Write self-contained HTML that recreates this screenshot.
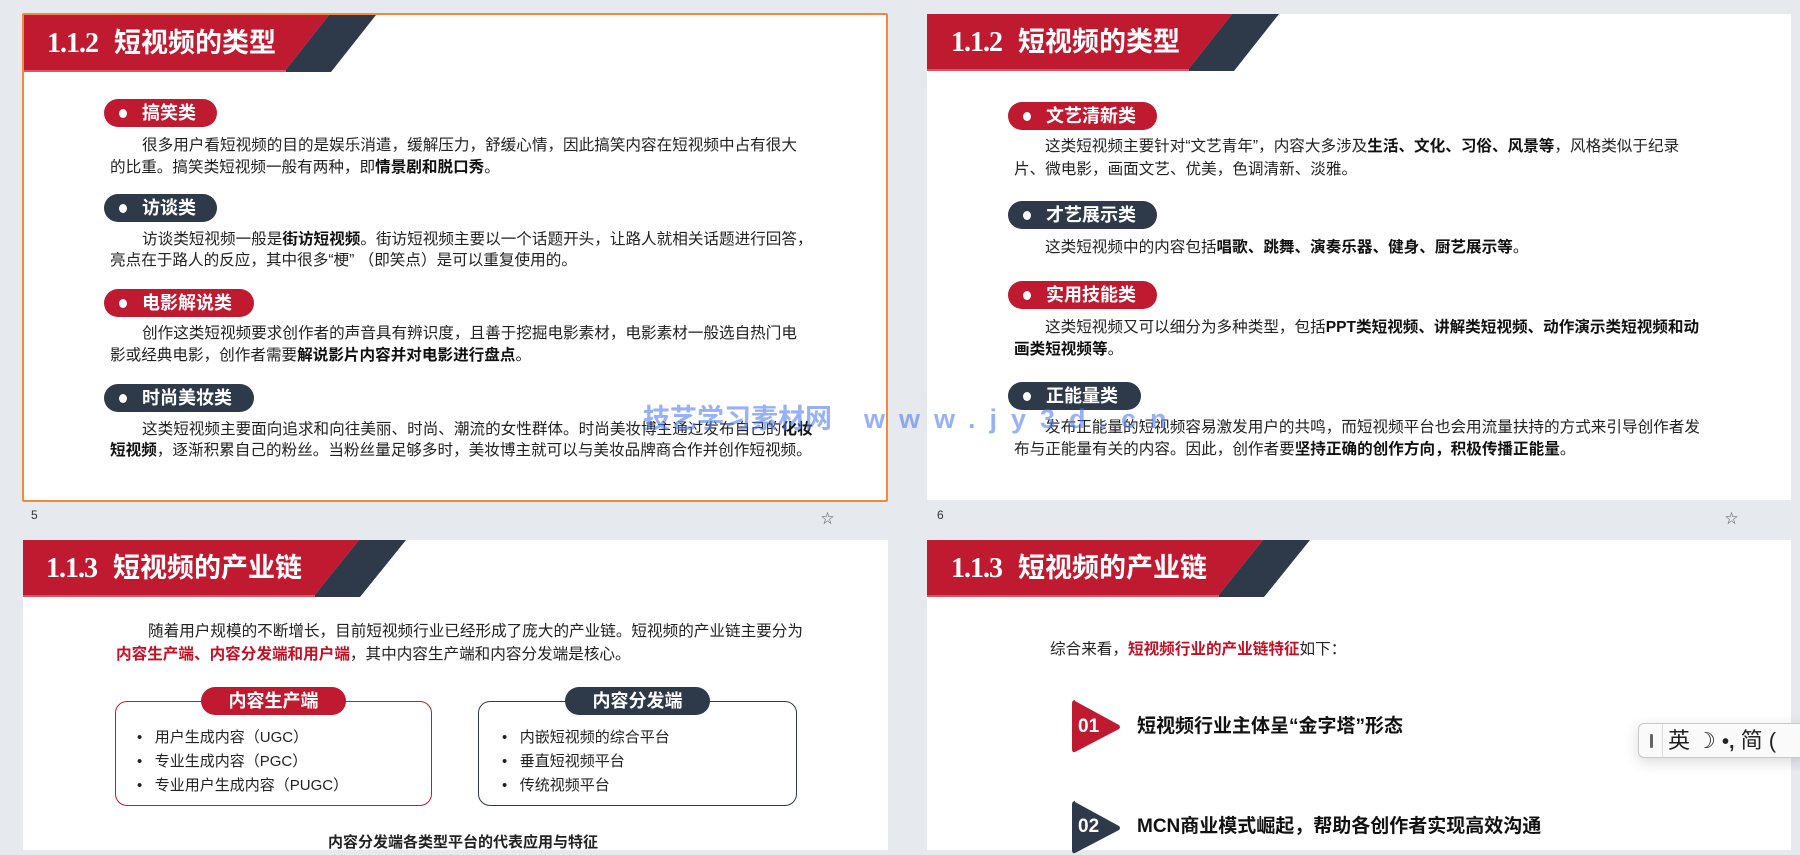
<!DOCTYPE html>
<html><head><meta charset="utf-8">
<style>
*{margin:0;padding:0;box-sizing:border-box}
body{width:1800px;height:841px;overflow:hidden;background:#e6e9ee;font-family:"Liberation Sans","Noto Sans CJK SC",sans-serif;position:relative;color:#222}
.slide{position:absolute;background:#fff;overflow:hidden}
.ab{position:absolute}
.hdr{position:absolute;left:0;top:0;width:420px;height:57px}
.ttl{position:absolute;top:0;height:57px;line-height:57px;color:#fff;font-weight:bold;font-size:27px;white-space:nowrap}
.ttl .n{font-family:"Liberation Serif",serif;font-size:28px;margin-right:16px;letter-spacing:-1px}
.pill{position:absolute;height:28px;border-radius:14px;color:#fff;font-weight:bold;font-size:18px;line-height:28px;padding-left:38px;white-space:nowrap}
.pill:before{content:"";position:absolute;left:15px;top:10px;width:8px;height:9px;border-radius:50%;background:#fff}
.r{background:#c01a30}.d{background:#2e3949}
.ln{position:absolute;font-size:15.6px;line-height:22px;height:22px;white-space:nowrap;color:#222}
.ln b{font-weight:bold;color:#111}
.pn{position:absolute;font-size:12px;color:#333}
.star{position:absolute;font-size:13px;color:#555}
.box{position:absolute;border:1.3px solid;border-radius:12px}
.bp{position:absolute;height:28px;border-radius:14px;color:#fff;font-weight:bold;font-size:18px;line-height:28px;text-align:center}
.bl{position:absolute;font-size:15px;line-height:22px;white-space:nowrap;color:#222}
</style></head><body>

<!-- Slide 5 -->
<div class="slide" style="left:22px;top:13px;width:866px;height:489px;border:2px solid #f5883c;border-radius:2px">
  <svg class="hdr" style="left:0;top:0" width="420" height="57"><polygon points="0,0 305,0 260,57 0,57" fill="#c01a30"/><polygon points="305,0 352,0 307,57 260,57" fill="#2e3949"/><rect x="0" y="55" width="262" height="2" fill="#d9566a"/></svg>
  <div class="ttl" style="left:23px;top:0px"><span class="n">1.1.2</span>短视频的类型</div>
</div>
<div class="pill r" style="left:104px;top:99px;width:113px">搞笑类</div>
<div class="ln" style="left:142px;top:135px">很多用户看短视频的目的是娱乐消遣，缓解压力，舒缓心情，因此搞笑内容在短视频中占有很大</div>
<div class="ln" style="left:110px;top:157px">的比重。搞笑类短视频一般有两种，即<b>情景剧和脱口秀</b>。</div>
<div class="pill d" style="left:104px;top:194px;width:113px">访谈类</div>
<div class="ln" style="left:142px;top:229px">访谈类短视频一般是<b>街访短视频</b>。街访短视频主要以一个话题开头，让路人就相关话题进行回答，</div>
<div class="ln" style="left:110px;top:250px">亮点在于路人的反应，其中很多“梗” （即笑点）是可以重复使用的。</div>
<div class="pill r" style="left:104px;top:289px;width:150px">电影解说类</div>
<div class="ln" style="left:142px;top:323px">创作这类短视频要求创作者的声音具有辨识度，且善于挖掘电影素材，电影素材一般选自热门电</div>
<div class="ln" style="left:110px;top:345px">影或经典电影，创作者需要<b>解说影片内容并对电影进行盘点</b>。</div>
<div class="pill d" style="left:104px;top:384px;width:150px">时尚美妆类</div>
<div class="ln" style="left:142px;top:419px">这类短视频主要面向追求和向往美丽、时尚、潮流的女性群体。时尚美妆博主通过发布自己的<b>化妆</b></div>
<div class="ln" style="left:110px;top:440px"><b>短视频</b>，逐渐积累自己的粉丝。当粉丝量足够多时，美妆博主就可以与美妆品牌商合作并创作短视频。</div>
<div class="pn" style="left:31px;top:508px">5</div>
<div class="star" style="left:821px;top:508px">☆</div>

<!-- Slide 6 -->
<div class="slide" style="left:927px;top:14px;width:864px;height:486px">
  <svg class="hdr" width="420" height="57"><polygon points="0,0 305,0 260,57 0,57" fill="#c01a30"/><polygon points="305,0 352,0 307,57 260,57" fill="#2e3949"/><rect x="0" y="55" width="262" height="2" fill="#d9566a"/></svg>
  <div class="ttl" style="left:24px"><span class="n">1.1.2</span>短视频的类型</div>
</div>
<div class="pill r" style="left:1008px;top:102px;width:149px">文艺清新类</div>
<div class="ln" style="left:1045px;top:136px">这类短视频主要针对“文艺青年”，内容大多涉及<b>生活、文化、习俗、风景等</b>，风格类似于纪录</div>
<div class="ln" style="left:1014px;top:159px">片、微电影，画面文艺、优美，色调清新、淡雅。</div>
<div class="pill d" style="left:1008px;top:201px;width:149px">才艺展示类</div>
<div class="ln" style="left:1045px;top:237px">这类短视频中的内容包括<b>唱歌、跳舞、演奏乐器、健身、厨艺展示等</b>。</div>
<div class="pill r" style="left:1008px;top:281px;width:149px">实用技能类</div>
<div class="ln" style="left:1045px;top:317px">这类短视频又可以细分为多种类型，包括<b>PPT类短视频、讲解类短视频、动作演示类短视频和动</b></div>
<div class="ln" style="left:1014px;top:339px"><b>画类短视频等</b>。</div>
<div class="pill d" style="left:1008px;top:382px;width:133px">正能量类</div>
<div class="ln" style="left:1045px;top:417px">发布正能量的短视频容易激发用户的共鸣，而短视频平台也会用流量扶持的方式来引导创作者发</div>
<div class="ln" style="left:1014px;top:439px">布与正能量有关的内容。因此，创作者要<b>坚持正确的创作方向，积极传播正能量</b>。</div>
<div class="pn" style="left:937px;top:508px">6</div>
<div class="star" style="left:1725px;top:508px">☆</div>

<!-- watermark -->
<div class="ab" style="left:643px;top:402px;font-size:27px;font-weight:bold;color:rgba(80,125,240,0.6);white-space:nowrap;line-height:34px">技艺学习素材网<span style="margin-left:32px;letter-spacing:14px;font-family:'Liberation Sans',sans-serif">www.jy3d.cn</span></div>

<!-- Slide bottom-left -->
<div class="slide" style="left:23px;top:540px;width:865px;height:310px">
  <svg class="hdr" width="420" height="57"><polygon points="0,0 336,0 290,57 0,57" fill="#c01a30"/><polygon points="336,0 383,0 337,57 290,57" fill="#2e3949"/><rect x="0" y="55" width="292" height="2" fill="#d9566a"/></svg>
  <div class="ttl" style="left:23px"><span class="n">1.1.3</span>短视频的产业链</div>
</div>
<div class="ln" style="left:148px;top:621px">随着用户规模的不断增长，目前短视频行业已经形成了庞大的产业链。短视频的产业链主要分为</div>
<div class="ln" style="left:116px;top:644px"><b style="color:#c40f24">内容生产端、内容分发端和用户端</b>，其中内容生产端和内容分发端是核心。</div>
<div class="box" style="left:115px;top:701px;width:317px;height:105px;border-color:#c01a30"></div>
<div class="bp r" style="left:201px;top:687px;width:145px">内容生产端</div>
<div class="bl" style="left:137px;top:727px">•&nbsp;&nbsp; 用户生成内容（UGC）</div>
<div class="bl" style="left:137px;top:751px">•&nbsp;&nbsp; 专业生成内容（PGC）</div>
<div class="bl" style="left:137px;top:775px">•&nbsp;&nbsp; 专业用户生成内容（PUGC）</div>
<div class="box" style="left:478px;top:701px;width:319px;height:105px;border-color:#2e3949"></div>
<div class="bp d" style="left:565px;top:687px;width:145px">内容分发端</div>
<div class="bl" style="left:502px;top:727px">•&nbsp;&nbsp; 内嵌短视频的综合平台</div>
<div class="bl" style="left:502px;top:751px">•&nbsp;&nbsp; 垂直短视频平台</div>
<div class="bl" style="left:502px;top:775px">•&nbsp;&nbsp; 传统视频平台</div>
<div class="bl" style="left:328px;top:832px;font-weight:bold;font-size:15px">内容分发端各类型平台的代表应用与特征</div>

<!-- Slide bottom-right -->
<div class="slide" style="left:927px;top:540px;width:864px;height:310px">
  <svg class="hdr" width="420" height="57"><polygon points="0,0 336,0 290,57 0,57" fill="#c01a30"/><polygon points="336,0 383,0 337,57 290,57" fill="#2e3949"/><rect x="0" y="55" width="292" height="2" fill="#d9566a"/></svg>
  <div class="ttl" style="left:24px"><span class="n">1.1.3</span>短视频的产业链</div>
</div>
<div class="ln" style="left:1050px;top:639px">综合来看，<b style="color:#c40f24">短视频行业的产业链特征</b>如下：</div>
<svg class="ab" style="left:1072px;top:700px" width="50" height="54"><path d="M3,0 Q0,0 0,4 L0,49 Q0,53 3,52 L47,29 Q49,27 47,25 L3,1Z" fill="#c01a30"/></svg>
<div class="ab" style="left:1078px;top:715px;color:#fff;font-weight:bold;font-size:19px;line-height:24px">01</div>
<div class="ab" style="left:1137px;top:715px;font-weight:bold;font-size:19px;line-height:24px;color:#111;white-space:nowrap">短视频行业主体呈“金字塔”形态</div>
<svg class="ab" style="left:1072px;top:801px" width="50" height="54"><path d="M3,0 Q0,0 0,4 L0,49 Q0,53 3,52 L47,29 Q49,27 47,25 L3,1Z" fill="#2e3949"/></svg>
<div class="ab" style="left:1078px;top:815px;color:#fff;font-weight:bold;font-size:19px;line-height:24px">02</div>
<div class="ab" style="left:1137px;top:815px;font-weight:bold;font-size:19px;line-height:24px;color:#111;white-space:nowrap">MCN商业模式崛起，帮助各创作者实现高效沟通</div>

<!-- IME toolbar -->
<div class="ab" style="left:1638px;top:723px;width:170px;height:35px;background:#fafafa;border:1px solid #c8c8c8;border-radius:6px;box-shadow:0 4px 14px rgba(0,0,0,0.15)">
  <div class="ab" style="left:11px;top:10px;width:3px;height:14px;background:#666;border-radius:1px"></div>
  <div class="ab" style="left:23px;top:0;width:1px;height:33px;background:#ddd"></div>
  <div class="ab" style="left:29px;top:3px;font-size:22px;line-height:28px;color:#222;white-space:nowrap">英 <span style="font-size:22px">☽</span> <span style="font-size:20px;font-weight:bold">•,</span> 简 (</div>
</div>
</body></html>
